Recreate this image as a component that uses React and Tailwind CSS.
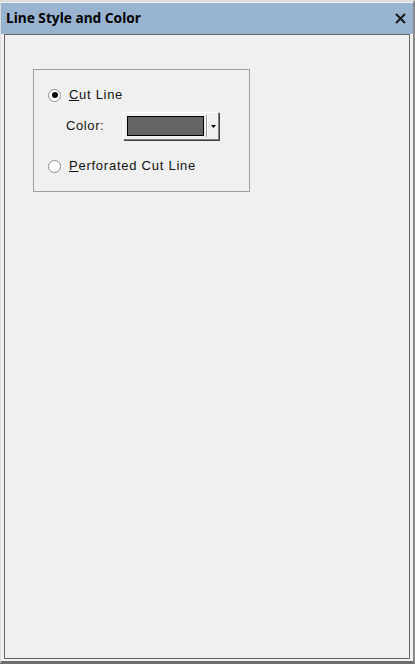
export default function App() {
  const uiFont = { fontFamily: '"Liberation Sans", Arial, sans-serif' };
  return (
    <div className="w-[415px] h-[664px] bg-[#f0f0f0] flex flex-col border-t-[2px] border-l-[1px] border-t-[#dcdcdc] border-l-[#dcdcdc] border-r-[2px] border-r-[#8a8a8a] border-b-[3px] border-b-[#6e6e6e] overflow-hidden">
      <div className="h-[31px] shrink-0 bg-[#99b4d1] flex items-center justify-between pl-[5px] pr-[6px] mt-[1px]">
        <span className="text-[13.7px] font-bold text-black" style={{ fontFamily: '"Noto Sans", "Open Sans", sans-serif' }}>
          Line Style and Color
        </span>
        <svg width="11" height="11" viewBox="0 0 11 11" className="mr-[1px]">
          <path d="M1 1 L10 10 M10 1 L1 10" stroke="#1a1a1a" strokeWidth="2" />
        </svg>
      </div>
      <div className="flex-1 mx-[3px] mb-[2px] border border-[#646464] bg-[#f0f0f0] pt-[34px] pl-[28px]">
        <div className="w-[217px] h-[123px] border border-[#a0a0a0] pt-[18px] pl-[14px] text-[13px] text-[#111]" style={uiFont}>
          <label className="flex items-center h-[14px]">
            <span className="w-[13px] h-[13px] rounded-full border border-[#8c8c8c] bg-white flex items-center justify-center">
              <span className="w-[6px] h-[6px] rounded-full bg-black" />
            </span>
            <span className="ml-[8px] tracking-[0.7px]"><span className="underline">C</span>ut Line</span>
          </label>
          <div className="flex items-center mt-[10px] ml-[18px]">
            <span className="w-[57px] tracking-[0.6px]">Color:</span>
            <div className="flex items-stretch w-[96px] h-[28px] bg-[#f0f0f0] border border-t-white border-l-white border-r-[#808080] border-b-[#808080] shadow-[1px_1px_0_#404040]">
              <div className="flex-1 flex items-center pl-[3px] pr-[2px]">
                <div className="w-full h-[20px] bg-[#646464] border border-black" />
              </div>
              <div className="w-[1px] bg-[#a0a0a0] my-[2px]" />
              <div className="w-[1px] bg-white my-[2px]" />
              <div className="w-[10px] flex items-center justify-center">
                <svg width="5" height="3" viewBox="0 0 5 3"><path d="M0 0 H5 L2.5 3 Z" fill="#000" /></svg>
              </div>
            </div>
          </div>
          <label className="flex items-center h-[14px] mt-[19px]">
            <span className="w-[13px] h-[13px] rounded-full border border-[#8c8c8c] bg-white" />
            <span className="ml-[8px] tracking-[0.75px]"><span className="underline">P</span>erforated Cut Line</span>
          </label>
        </div>
      </div>
    </div>
  );
}
